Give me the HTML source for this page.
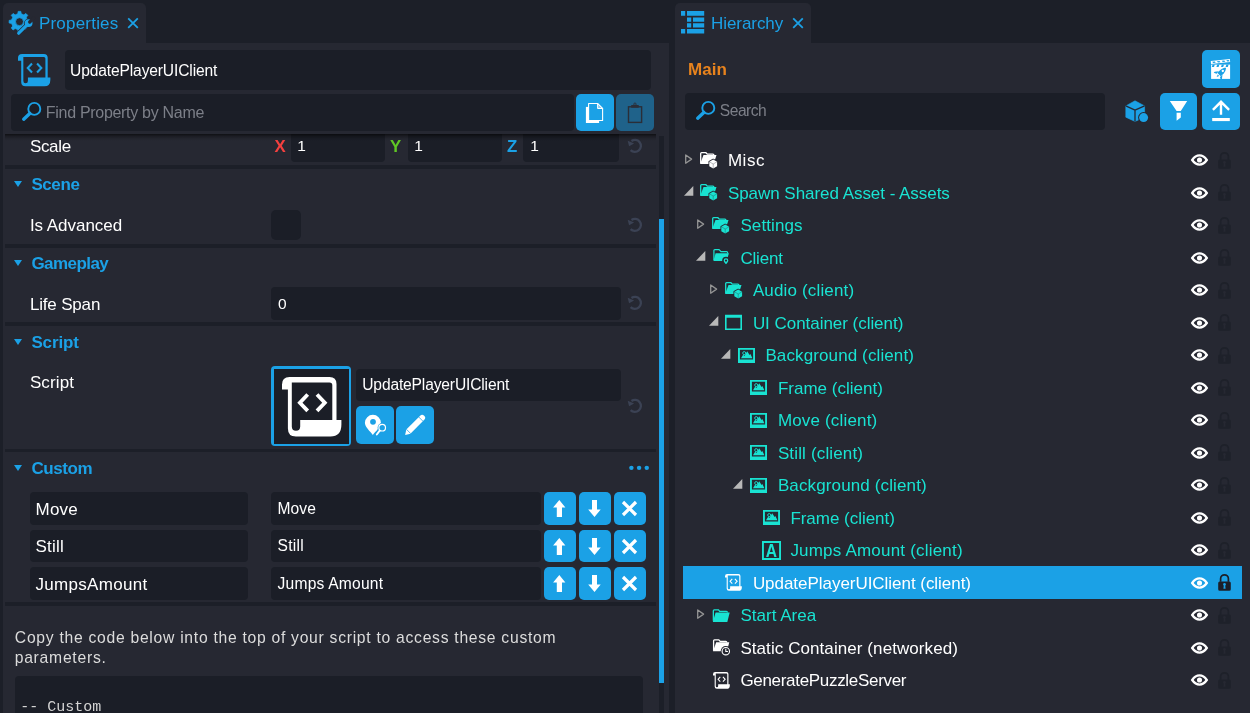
<!DOCTYPE html>
<html><head><meta charset="utf-8"><title>Editor</title>
<style>
*{box-sizing:border-box;margin:0;padding:0}
html,body{width:1250px;height:713px;overflow:hidden;background:#1c1f28;font-family:"Liberation Sans",sans-serif;color:#fff}
#root{position:relative;width:1250px;height:713px;overflow:hidden;background:#1c1f28;will-change:transform}
#root div,#root span,#root svg{position:absolute}
svg{display:block;overflow:visible}
.panel{background:#262832}
.tab{background:#262832;border-radius:5px 5px 0 0}
.t{white-space:nowrap;line-height:20px;color:#fff}
.inp{background:#1b1e27;border-radius:4px}
.b{font-weight:bold}
.sep{background:#1c1f28}
.btn{background:#1ba1e6;border-radius:5px}
</style></head><body>
<div id="root">
<div class="tab" style="left:3px;top:3px;width:143px;height:41px;"></div>
<div class="panel" style="left:3px;top:43px;width:666.2px;height:670px;"></div>
<svg style="left:9px;top:11px;" width="24" height="24" viewBox="0 0 24 24" fill="#1ba1e6" stroke="none" color="#1ba1e6"><clipPath id="gcl"><circle cx="10.5" cy="10.7" r="10.2"/></clipPath><path fill-rule="evenodd" stroke="currentColor" stroke-width="0.8" stroke-linejoin="round" d="M8.80,2.78 L9.20,0.38 L11.80,0.38 L12.20,2.78 L14.89,3.90 L16.87,2.48 L18.72,4.33 L17.30,6.31 L18.42,9.00 L20.82,9.40 L20.82,12.00 L18.42,12.40 L17.30,15.09 L18.72,17.07 L16.87,18.92 L14.89,17.50 L12.20,18.62 L11.80,21.02 L9.20,21.02 L8.80,18.62 L6.11,17.50 L4.13,18.92 L2.28,17.07 L3.70,15.09 L2.58,12.40 L0.18,12.00 L0.18,9.40 L2.58,9.00 L3.70,6.31 L2.28,4.33 L4.13,2.48 L6.11,3.90Z M14.5,10.7 A4,4 0 1 0 6.5,10.7 A4,4 0 1 0 14.5,10.7Z"/><path d="M15.3,21.4 L21,15.8" stroke="#262832" stroke-width="2.4" fill="none"/><g stroke="#262832" stroke-width="1.3" clip-path="url(#gcl)"><path d="M9.7,22.2 L18.6,13.4" stroke-width="4.5" stroke-linecap="round" fill="none"/><circle cx="19.6" cy="12.1" r="3.9" fill="#262832"/></g><path d="M9.7,22.2 L18.6,13.4" stroke="currentColor" stroke-width="3.2" stroke-linecap="round" fill="none"/><circle cx="19.6" cy="12.1" r="3.9"/><path d="M20.7,11.0 L24.6,7.1" stroke="#262832" stroke-width="3.3" stroke-linecap="round" fill="none"/></svg>
<span class="t" style="left:38.98px;top:14px;font-size:17px;letter-spacing:0.202px;color:#1ba1e6;">Properties</span>
<svg style="left:126.5px;top:16.5px;" width="12" height="12" viewBox="0 0 12 12" fill="#1ba1e6" stroke="none" color="#1ba1e6"><path d="M1.2 1.3 L10.8 10.9 M10.8 1.3 L1.2 10.9" stroke="currentColor" stroke-width="1.8" fill="none"/></svg>
<span class="t" style="left:29.88px;top:137px;font-size:17px;letter-spacing:-0.326px;">Scale</span>
<span class="t" style="left:274.38px;top:137px;font-size:16.8px;font-weight:bold;color:#f4403f;">X</span>
<div class="inp" style="left:291px;top:127px;width:94px;height:35px;"></div>
<span class="t" style="left:297.37px;top:136px;font-size:15.5px;">1</span>
<span class="t" style="left:390.08px;top:137px;font-size:16.8px;font-weight:bold;color:#60c725;">Y</span>
<div class="inp" style="left:408px;top:127px;width:94px;height:35px;"></div>
<span class="t" style="left:414.37px;top:136px;font-size:15.5px;">1</span>
<span class="t" style="left:507.08px;top:137px;font-size:16.8px;font-weight:bold;color:#1ba1e6;">Z</span>
<div class="inp" style="left:523.2px;top:127px;width:95.8px;height:35px;"></div>
<span class="t" style="left:530.37px;top:136px;font-size:15.5px;">1</span>
<svg style="left:628px;top:140px;" width="15" height="15" viewBox="0 0 15 15" fill="#3b4254" stroke="none" color="#3b4254"><path d="M3.46,1 A6,6 0 1 1 2.6,10.1" fill="none" stroke="currentColor" stroke-width="2.3"/><path d="M-0.3,0.8 L6.1,3.4 L1.1,6.2 Z"/></svg>
<div class="sep" style="left:5px;top:165px;width:651px;height:4px;"></div>
<div style="left:14.2px;top:180.9px;width:0;height:0;border-left:4.8px solid transparent;border-right:4.8px solid transparent;border-top:6.2px solid #1ba1e6"></div>
<span class="t" style="left:31.38px;top:175px;font-size:17px;font-weight:bold;letter-spacing:-0.399px;color:#1ba1e6;">Scene</span>
<span class="t" style="left:29.88px;top:216px;font-size:17px;letter-spacing:-0.030px;">Is Advanced</span>
<div class="inp" style="left:271px;top:210px;width:30px;height:30px;border-radius:5px"></div>
<svg style="left:628px;top:219px;" width="15" height="15" viewBox="0 0 15 15" fill="#3b4254" stroke="none" color="#3b4254"><path d="M3.46,1 A6,6 0 1 1 2.6,10.1" fill="none" stroke="currentColor" stroke-width="2.3"/><path d="M-0.3,0.8 L6.1,3.4 L1.1,6.2 Z"/></svg>
<div class="sep" style="left:5px;top:244px;width:651px;height:3.5px;"></div>
<div style="left:14.2px;top:259.9px;width:0;height:0;border-left:4.8px solid transparent;border-right:4.8px solid transparent;border-top:6.2px solid #1ba1e6"></div>
<span class="t" style="left:31.38px;top:254px;font-size:17px;font-weight:bold;letter-spacing:-0.546px;color:#1ba1e6;">Gameplay</span>
<span class="t" style="left:29.98px;top:295px;font-size:17px;letter-spacing:-0.183px;">Life Span</span>
<div class="inp" style="left:271px;top:287px;width:350px;height:33px;"></div>
<span class="t" style="left:278.07px;top:294px;font-size:15.5px;">0</span>
<svg style="left:628px;top:297px;" width="15" height="15" viewBox="0 0 15 15" fill="#3b4254" stroke="none" color="#3b4254"><path d="M3.46,1 A6,6 0 1 1 2.6,10.1" fill="none" stroke="currentColor" stroke-width="2.3"/><path d="M-0.3,0.8 L6.1,3.4 L1.1,6.2 Z"/></svg>
<div class="sep" style="left:5px;top:322px;width:651px;height:4px;"></div>
<div style="left:14.2px;top:338.9px;width:0;height:0;border-left:4.8px solid transparent;border-right:4.8px solid transparent;border-top:6.2px solid #1ba1e6"></div>
<span class="t" style="left:31.38px;top:333px;font-size:17px;font-weight:bold;letter-spacing:-0.131px;color:#1ba1e6;">Script</span>
<span class="t" style="left:29.88px;top:373px;font-size:17px;letter-spacing:0.139px;">Script</span>
<div class="" style="left:270.8px;top:365.8px;width:80.4px;height:80.2px;background:#1ba1e6;border-radius:4px"></div>
<div class="" style="left:274.1px;top:369.1px;width:74.6px;height:74.7px;background:#1b1e27"></div>
<svg style="left:281.6px;top:376.7px;" width="60" height="60" viewBox="0 0 60 60" fill="#fff" stroke="none" color="#fff"><path fill-rule="evenodd" d="M5.9,12.4 H0 V7.5 Q0,0 7.5,0 H47.5 Q54.5,0 54.5,7 V43.1 H59.4 V47.4 Q59.4,59.4 48.4,59.4 H13.9 Q5.9,59.4 5.9,51.4 Z M9.8,5.5 H47.5 Q50.3,5.5 50.3,8.3 V43.1 H18.2 V49.6 Q18.2,53.8 14,53.8 Q9.8,53.8 9.8,49.6 Z"/><path d="M25.7,17.5 L17.9,25.7 L25.7,33.9 M35,17.5 L42.8,25.7 L35,33.9" fill="none" stroke="currentColor" stroke-width="3.8"/></svg>
<div class="inp" style="left:356px;top:369px;width:265px;height:32px;"></div>
<span class="t" style="left:362.26px;top:375px;font-size:15.6px;letter-spacing:-0.153px;">UpdatePlayerUIClient</span>
<div class="btn" style="left:356px;top:406px;width:38px;height:38px;"></div>
<svg style="left:356px;top:406px;" width="38" height="38" viewBox="0 0 38 38" fill="#fff" stroke="none" color="#fff"><path fill-rule="evenodd" d="M16.9,8.8 A8,8 0 0 1 24.9,16.8 C24.9,21 19.5,25.5 16.85,28.9 C14.2,25.5 8.9,21 8.9,16.8 A8,8 0 0 1 16.9,8.8 Z M19.9,15.8 A2.9,2.9 0 1 0 14.1,15.8 A2.9,2.9 0 1 0 19.9,15.8Z"/><path d="M23.8,24.3 L20.7,28.6" stroke="#1ba1e6" stroke-width="3.4" stroke-linecap="round" fill="none"/><circle cx="26.2" cy="21.7" r="4.6" fill="#1ba1e6"/><path d="M23.9,24.4 L20.8,28.5" stroke="currentColor" stroke-width="1.9" stroke-linecap="round" fill="none"/><circle cx="26.2" cy="21.7" r="3.3" fill="#1ba1e6" stroke="currentColor" stroke-width="1.2"/></svg>
<div class="btn" style="left:396px;top:406px;width:38px;height:38px;"></div>
<svg style="left:396px;top:406px;" width="38" height="38" viewBox="0 0 38 38" fill="#fff" stroke="none" color="#fff"><g transform="translate(9.1,28.9) rotate(-45)"><path d="M0,0 L4.6,-2.9 H24.2 Q27,-2.9 27,0 Q27,2.9 24.2,2.9 H4.6 Z"/><path d="M4.9,-3.2 V3.2 M22.3,-3.2 V3.2" stroke="#1ba1e6" stroke-width="0.7" fill="none"/></g></svg>
<svg style="left:628px;top:400px;" width="15" height="15" viewBox="0 0 15 15" fill="#3b4254" stroke="none" color="#3b4254"><path d="M3.46,1 A6,6 0 1 1 2.6,10.1" fill="none" stroke="currentColor" stroke-width="2.3"/><path d="M-0.3,0.8 L6.1,3.4 L1.1,6.2 Z"/></svg>
<div class="sep" style="left:5px;top:449px;width:651px;height:3px;"></div>
<div style="left:14.2px;top:464.9px;width:0;height:0;border-left:4.8px solid transparent;border-right:4.8px solid transparent;border-top:6.2px solid #1ba1e6"></div>
<span class="t" style="left:31.38px;top:459px;font-size:17px;font-weight:bold;letter-spacing:-0.397px;color:#1ba1e6;">Custom</span>
<svg style="left:629px;top:464.6px;" width="20.2" height="5.7" viewBox="0 0 21 5" fill="#1ba1e6" stroke="none" color="#1ba1e6"><circle cx="2.5" cy="2.5" r="2.3"/><circle cx="10.5" cy="2.5" r="2.3"/><circle cx="18.5" cy="2.5" r="2.3"/></svg>
<div class="inp" style="left:30px;top:492px;width:218px;height:33px;"></div>
<span class="t" style="left:35.58px;top:500px;font-size:17px;letter-spacing:0.205px;">Move</span>
<div class="inp" style="left:271px;top:492px;width:270px;height:33px;"></div>
<span class="t" style="left:277.56px;top:499px;font-size:15.6px;letter-spacing:0.065px;">Move</span>
<div class="btn" style="left:544px;top:492px;width:32.2px;height:33px;border-radius:5px"></div>
<svg style="left:544px;top:492.0px;" width="32" height="33" viewBox="0 0 32 33" fill="#fff" stroke="none" color="#fff"><path d="M15.3,8 L21.4,15.5 H18 V25 H12.8 V15.5 H9.1 Z"/></svg>
<div class="btn" style="left:579px;top:492px;width:32.2px;height:33px;border-radius:5px"></div>
<svg style="left:579px;top:492.0px;" width="32" height="33" viewBox="0 0 32 33" fill="#fff" stroke="none" color="#fff"><path d="M15.5,25 L21.7,17.5 H18 V8 H13 V17.5 H9.2 Z"/></svg>
<div class="btn" style="left:614px;top:492px;width:32.2px;height:33px;border-radius:5px"></div>
<svg style="left:614px;top:492.0px;" width="32" height="33" viewBox="0 0 32 33" fill="#fff" stroke="none" color="#fff"><path d="M9,10 L22,23 M22,10 L9,23" stroke="currentColor" stroke-width="3.2" fill="none"/></svg>
<div class="inp" style="left:30px;top:530px;width:218px;height:32px;"></div>
<span class="t" style="left:35.58px;top:537px;font-size:17px;letter-spacing:0.199px;">Still</span>
<div class="inp" style="left:271px;top:530px;width:270px;height:32px;"></div>
<span class="t" style="left:277.56px;top:536px;font-size:15.6px;letter-spacing:0.272px;">Still</span>
<div class="btn" style="left:544px;top:530px;width:32.2px;height:32px;border-radius:5px"></div>
<svg style="left:544px;top:529.5px;" width="32" height="33" viewBox="0 0 32 33" fill="#fff" stroke="none" color="#fff"><path d="M15.3,8 L21.4,15.5 H18 V25 H12.8 V15.5 H9.1 Z"/></svg>
<div class="btn" style="left:579px;top:530px;width:32.2px;height:32px;border-radius:5px"></div>
<svg style="left:579px;top:529.5px;" width="32" height="33" viewBox="0 0 32 33" fill="#fff" stroke="none" color="#fff"><path d="M15.5,25 L21.7,17.5 H18 V8 H13 V17.5 H9.2 Z"/></svg>
<div class="btn" style="left:614px;top:530px;width:32.2px;height:32px;border-radius:5px"></div>
<svg style="left:614px;top:529.5px;" width="32" height="33" viewBox="0 0 32 33" fill="#fff" stroke="none" color="#fff"><path d="M9,10 L22,23 M22,10 L9,23" stroke="currentColor" stroke-width="3.2" fill="none"/></svg>
<div class="inp" style="left:30px;top:567px;width:218px;height:33px;"></div>
<span class="t" style="left:35.58px;top:575px;font-size:17px;letter-spacing:0.293px;">JumpsAmount</span>
<div class="inp" style="left:271px;top:567px;width:270px;height:33px;"></div>
<span class="t" style="left:277.56px;top:574px;font-size:15.6px;letter-spacing:0.212px;">Jumps Amount</span>
<div class="btn" style="left:544px;top:567px;width:32.2px;height:33px;border-radius:5px"></div>
<svg style="left:544px;top:567.0px;" width="32" height="33" viewBox="0 0 32 33" fill="#fff" stroke="none" color="#fff"><path d="M15.3,8 L21.4,15.5 H18 V25 H12.8 V15.5 H9.1 Z"/></svg>
<div class="btn" style="left:579px;top:567px;width:32.2px;height:33px;border-radius:5px"></div>
<svg style="left:579px;top:567.0px;" width="32" height="33" viewBox="0 0 32 33" fill="#fff" stroke="none" color="#fff"><path d="M15.5,25 L21.7,17.5 H18 V8 H13 V17.5 H9.2 Z"/></svg>
<div class="btn" style="left:614px;top:567px;width:32.2px;height:33px;border-radius:5px"></div>
<svg style="left:614px;top:567.0px;" width="32" height="33" viewBox="0 0 32 33" fill="#fff" stroke="none" color="#fff"><path d="M9,10 L22,23 M22,10 L9,23" stroke="currentColor" stroke-width="3.2" fill="none"/></svg>
<div class="sep" style="left:5px;top:602px;width:651px;height:4px;"></div>
<span class="t" style="left:14.86px;top:628px;font-size:15.7px;letter-spacing:0.721px;color:#dcdcdc;">Copy the code below into the top of your script to access these custom</span>
<span class="t" style="left:14.66px;top:648px;font-size:15.7px;letter-spacing:0.754px;color:#dcdcdc;">parameters.</span>
<div class="inp" style="left:15px;top:676px;width:628px;height:50px;"></div>
<span class="t" style="left:20.30px;top:698px;font-size:15px;font-family:'Liberation Mono',monospace;color:#d4d4d4;">-- Custom</span>
<div class="panel" style="left:5px;top:43px;width:651px;height:91.2px;"></div>
<div class="" style="left:5px;top:134.2px;width:651px;height:6.5px;background:linear-gradient(to bottom,rgba(0,0,0,.6),rgba(0,0,0,.28) 35%,rgba(0,0,0,.08) 70%,rgba(0,0,0,0))"></div>
<svg style="left:17.8px;top:53.8px;" width="32.7" height="32.7" viewBox="0 0 60 60" fill="#1ba1e6" stroke="none" color="#1ba1e6"><path fill-rule="evenodd" d="M5.9,12.4 H0 V7.5 Q0,0 7.5,0 H47.5 Q54.5,0 54.5,7 V43.1 H59.4 V47.4 Q59.4,59.4 48.4,59.4 H13.9 Q5.9,59.4 5.9,51.4 Z M9.8,5.5 H47.5 Q50.3,5.5 50.3,8.3 V43.1 H18.2 V49.6 Q18.2,53.8 14,53.8 Q9.8,53.8 9.8,49.6 Z"/><path d="M25.7,17.5 L17.9,25.7 L25.7,33.9 M35,17.5 L42.8,25.7 L35,33.9" fill="none" stroke="currentColor" stroke-width="3.8"/></svg>
<div class="inp" style="left:65px;top:50px;width:586px;height:40px;"></div>
<span class="t" style="left:70.06px;top:61px;font-size:15.6px;letter-spacing:-0.138px;">UpdatePlayerUIClient</span>
<div class="inp" style="left:11px;top:94px;width:562.5px;height:37px;"></div>
<svg style="left:21px;top:101px;" width="22" height="22" viewBox="0 0 22 22" fill="#1ba1e6" stroke="none" color="#1ba1e6"><circle cx="13.3" cy="7.9" r="6" fill="none" stroke="currentColor" stroke-width="1.9"/><path d="M8.8,12.4 L2.7,18.2" stroke="currentColor" stroke-width="3.4" stroke-linecap="round"/></svg>
<span class="t" style="left:45.84px;top:103px;font-size:16px;letter-spacing:-0.301px;color:#7c7f88;">Find Property by Name</span>
<div class="btn" style="left:576px;top:94px;width:38px;height:37px;"></div>
<svg style="left:576px;top:94px;" width="38" height="38" viewBox="0 0 38 38" fill="#fff" stroke="none" color="#fff"><path d="M9.9,12.9 H23.1 V29 H9.9 Z"/><path d="M12.6,9.5 H21.6 L26.6,14.5 V26.5 H12.6 Z" fill="#1ba1e6" stroke="currentColor" stroke-width="1.1" stroke-linejoin="round"/><path d="M21.6,9.5 V14.5 H26.6 Z" fill="#8fd0f2" stroke="currentColor" stroke-width="1" stroke-linejoin="round"/></svg>
<div class="btn" style="left:616px;top:94px;width:38px;height:37px;background:#1f628a"></div>
<svg style="left:616px;top:94px;" width="38" height="38" viewBox="0 0 38 38" fill="#2b2e38" stroke="none" color="#2b2e38"><rect x="12.5" y="12.8" width="13.1" height="15.6" fill="none" stroke="currentColor" stroke-width="1.4"/><rect x="15" y="11" width="7.9" height="2.7" rx="0.8"/><circle cx="18.95" cy="10.2" r="1.2" fill="none" stroke="currentColor" stroke-width="0.9"/></svg>
<div class="" style="left:659.1px;top:136px;width:5px;height:577px;background:#1c1f28"></div>
<div class="" style="left:659.1px;top:218.8px;width:5px;height:464.2px;background:#1ba1e6"></div>
<div class="tab" style="left:674.9px;top:3px;width:136.2px;height:41px;"></div>
<div class="panel" style="left:674.9px;top:43px;width:575.1px;height:670px;"></div>
<svg style="left:681px;top:11px;" width="24" height="24" viewBox="0 0 24 24" fill="#1ba1e6" stroke="none" color="#1ba1e6"><path d="M0,0h4.2v4.8h-4.2z M6,0h17.2v4.8h-17.2z M6,6.5h4.2v4.2h-4.2z M12,6.5h11.2v4.2h-11.2z M6,12.3h4.2v4.2h-4.2z M12,12.3h11.2v4.2h-11.2z M0,18h4.2v4.5h-4.2z M6,18h17.2v4.5h-17.2z"/></svg>
<span class="t" style="left:710.98px;top:14px;font-size:17px;letter-spacing:-0.061px;color:#1ba1e6;">Hierarchy</span>
<svg style="left:791.5px;top:16.5px;" width="12" height="12" viewBox="0 0 12 12" fill="#1ba1e6" stroke="none" color="#1ba1e6"><path d="M1.2 1.3 L10.8 10.9 M10.8 1.3 L1.2 10.9" stroke="currentColor" stroke-width="1.8" fill="none"/></svg>
<span class="t" style="left:688.08px;top:60px;font-size:17px;font-weight:bold;letter-spacing:-0.009px;color:#e8831d;">Main</span>
<div class="inp" style="left:685px;top:93px;width:420px;height:37px;"></div>
<svg style="left:694.9px;top:99.7px;" width="22" height="22" viewBox="0 0 22 22" fill="#1ba1e6" stroke="none" color="#1ba1e6"><circle cx="13.3" cy="7.9" r="6" fill="none" stroke="currentColor" stroke-width="1.9"/><path d="M8.8,12.4 L2.7,18.2" stroke="currentColor" stroke-width="3.4" stroke-linecap="round"/></svg>
<span class="t" style="left:719.86px;top:101px;font-size:15.6px;letter-spacing:-0.504px;color:#7c7f88;">Search</span>
<div class="btn" style="left:1202px;top:50px;width:38px;height:38px;"></div>
<svg style="left:1202px;top:50px;" width="38" height="38" viewBox="0 0 38 38" fill="#fff" stroke="none" color="#fff"><rect x="9.1" y="14.6" width="19" height="14.3"/><path d="M10.6,14.6 h2.2 l-0.8,2.3 h-2.2z M15.2,14.6 h2.2 l-0.8,2.3 h-2.2z M19.8,14.6 h2.2 l-0.8,2.3 h-2.2z M24.4,14.6 h2.2 l-0.8,2.3 h-2.2z" fill="#1ba1e6"/><g transform="rotate(-6 9.1 14.2)"><rect x="9.1" y="10.9" width="19.2" height="3"/><path d="M10.4,11.8 h2.6 l0.9,1.5 h-2.6z M15.2,11.8 h2.6 l0.9,1.5 h-2.6z M20,11.8 h2.6 l0.9,1.5 h-2.6z M24.6,11.8 h2.4 l0.9,1.5 h-2.4z" fill="#1ba1e6"/></g><g transform="translate(19.3,22.4) rotate(45) scale(1.18)" fill="#1ba1e6"><path d="M0,-5.6 C2.2,-3.6 2.4,0 1.9,2.6 H-1.9 C-2.4,0 -2.2,-3.6 0,-5.6Z"/><path d="M-2.2,0.8 L-4.3,3.6 V4.8 L-2,3.6Z M2.2,0.8 L4.3,3.6 V4.8 L2,3.6Z M-0.8,3.4 H0.8 L0,5.6Z"/><circle cx="0" cy="-1.8" r="1" fill="#fff"/></g></svg>
<svg style="left:1120px;top:100px;" width="30" height="30" viewBox="0 0 30 30" fill="#1ba1e6" stroke="none" color="#1ba1e6"><path d="M15,0.8 L24.6,5.9 L24.6,17.2 L15,21.4 L5.8,17.2 L5.8,5.9Z" stroke-linejoin="round" stroke="currentColor" stroke-width="0.6"/><path d="M15,10.2 L24.6,5.9 M15,10.2 L5.8,5.9 M15,10.2 V21.4" stroke="#262832" stroke-width="1.3" fill="none"/><circle cx="23.6" cy="17.6" r="5.5" fill="#262832"/><circle cx="23.6" cy="17.6" r="4.5"/></svg>
<div class="btn" style="left:1159.8px;top:93px;width:37.3px;height:37px;"></div>
<svg style="left:1160px;top:93px;" width="38" height="38" viewBox="0 0 38 38" fill="#fff" stroke="none" color="#fff"><path d="M9.8,8 H27.2 L20.8,18.1 H16.6 Z M16.6,19.8 H20.8 V24.5 L16.6,27.7 Z"/></svg>
<div class="btn" style="left:1202px;top:93px;width:38px;height:37px;"></div>
<svg style="left:1202px;top:93px;" width="38" height="38" viewBox="0 0 38 38" fill="#fff" stroke="none" color="#fff"><path d="M19,9.6 V21.8 M10.9,16.9 L19,8.8 L27.1,16.9" fill="none" stroke="currentColor" stroke-width="2.4"/><rect x="10.2" y="25" width="17.6" height="3.1"/></svg>
<svg style="left:685.0px;top:154.0px;" width="8" height="11" viewBox="0 0 8 11" fill="#949494" stroke="none" color="#949494"><path d="M0.7,1 L6.6,5.1 L0.7,9.2 Z" fill="none" stroke="currentColor" stroke-width="1.3" stroke-linejoin="round"/></svg>
<svg style="left:699.8px;top:151.8px;" width="19" height="19" viewBox="0 0 19 19" fill="#fff" stroke="none" color="#fff"><path d="M0.7,11.5 V1.6 Q0.7,0.7 1.6,0.7 H5.9 L7.3,2.2 H12.9 Q13.9,2.2 13.9,3.2" fill="none" stroke="currentColor" stroke-width="1.3"/><path d="M3.5,3.1 H16.5 L13.6,12 H0.1 Z"/><path d="M13.20,7.50 L17.10,9.75 L17.10,14.25 L13.20,16.50 L9.30,14.25 L9.30,9.75Z" stroke="#262832" stroke-width="1.7" stroke-linejoin="round" paint-order="stroke"/><path d="M13.2,12.0 L17.10,9.75 M13.2,12.0 L9.30,9.75 M13.2,12.0 V16.50" stroke="#262832" stroke-opacity="0.4" stroke-width="0.8" fill="none"/></svg>
<span class="t" style="left:727.88px;top:151px;font-size:17px;letter-spacing:0.537px;">Misc</span>
<svg style="left:1191px;top:154.0px;" width="17" height="12" viewBox="0 0 17 12" fill="#fff" stroke="none" color="#fff"><path d="M1.2,6 Q4.3,1.45 8.5,1.45 Q12.7,1.45 15.8,6 Q12.7,10.55 8.5,10.55 Q4.3,10.55 1.2,6 Z" fill="none" stroke="currentColor" stroke-width="2.3" stroke-linejoin="miter"/><circle cx="8.5" cy="6" r="2.55"/></svg>
<svg style="left:1218px;top:151.5px;" width="13" height="17" viewBox="0 0 13 17" fill="#1e212a" stroke="none" color="#1e212a"><path fill-rule="evenodd" d="M1.7,7.4 H11.3 Q12.8,7.4 12.8,8.9 V15.3 Q12.8,16.8 11.3,16.8 H1.7 Q0.2,16.8 0.2,15.3 V8.9 Q0.2,7.4 1.7,7.4 Z M6.5,9 A1.4,1.4 0 0 0 5.75,11.6 L5.4,14.8 H7.6 L7.25,11.6 A1.4,1.4 0 0 0 6.5,9 Z"/><path d="M2.6,7.8 V4.7 A3.9,3.9 0 0 1 10.4,4.7 V7.8" fill="none" stroke="currentColor" stroke-width="1.7"/></svg>
<svg style="left:684.0px;top:186.0px;" width="10" height="10" viewBox="0 0 10 10" fill="#b8b8b8" stroke="none" color="#b8b8b8"><path d="M9.3,0 V9.7 H0 Z"/></svg>
<svg style="left:699.8px;top:184.3px;" width="19" height="19" viewBox="0 0 19 19" fill="#19e3d2" stroke="none" color="#19e3d2"><path d="M0.7,11.5 V1.6 Q0.7,0.7 1.6,0.7 H5.9 L7.3,2.2 H12.9 Q13.9,2.2 13.9,3.2" fill="none" stroke="currentColor" stroke-width="1.3"/><path d="M3.5,3.1 H16.5 L13.6,12 H0.1 Z"/><path d="M13.20,7.50 L17.10,9.75 L17.10,14.25 L13.20,16.50 L9.30,14.25 L9.30,9.75Z" stroke="#262832" stroke-width="1.7" stroke-linejoin="round" paint-order="stroke"/><path d="M13.2,12.0 L17.10,9.75 M13.2,12.0 L9.30,9.75 M13.2,12.0 V16.50" stroke="#262832" stroke-opacity="0.4" stroke-width="0.8" fill="none"/></svg>
<span class="t" style="left:727.88px;top:184px;font-size:17px;letter-spacing:-0.041px;color:#19e3d2;">Spawn Shared Asset - Assets</span>
<svg style="left:1191px;top:186.5px;" width="17" height="12" viewBox="0 0 17 12" fill="#fff" stroke="none" color="#fff"><path d="M1.2,6 Q4.3,1.45 8.5,1.45 Q12.7,1.45 15.8,6 Q12.7,10.55 8.5,10.55 Q4.3,10.55 1.2,6 Z" fill="none" stroke="currentColor" stroke-width="2.3" stroke-linejoin="miter"/><circle cx="8.5" cy="6" r="2.55"/></svg>
<svg style="left:1218px;top:184.0px;" width="13" height="17" viewBox="0 0 13 17" fill="#1e212a" stroke="none" color="#1e212a"><path fill-rule="evenodd" d="M1.7,7.4 H11.3 Q12.8,7.4 12.8,8.9 V15.3 Q12.8,16.8 11.3,16.8 H1.7 Q0.2,16.8 0.2,15.3 V8.9 Q0.2,7.4 1.7,7.4 Z M6.5,9 A1.4,1.4 0 0 0 5.75,11.6 L5.4,14.8 H7.6 L7.25,11.6 A1.4,1.4 0 0 0 6.5,9 Z"/><path d="M2.6,7.8 V4.7 A3.9,3.9 0 0 1 10.4,4.7 V7.8" fill="none" stroke="currentColor" stroke-width="1.7"/></svg>
<svg style="left:697.25px;top:219.0px;" width="8" height="11" viewBox="0 0 8 11" fill="#949494" stroke="none" color="#949494"><path d="M0.7,1 L6.6,5.1 L0.7,9.2 Z" fill="none" stroke="currentColor" stroke-width="1.3" stroke-linejoin="round"/></svg>
<svg style="left:712.4px;top:216.8px;" width="19" height="19" viewBox="0 0 19 19" fill="#19e3d2" stroke="none" color="#19e3d2"><path d="M0.7,11.5 V1.6 Q0.7,0.7 1.6,0.7 H5.9 L7.3,2.2 H12.9 Q13.9,2.2 13.9,3.2" fill="none" stroke="currentColor" stroke-width="1.3"/><path d="M3.5,3.1 H16.5 L13.6,12 H0.1 Z"/><path d="M13.20,7.50 L17.10,9.75 L17.10,14.25 L13.20,16.50 L9.30,14.25 L9.30,9.75Z" stroke="#262832" stroke-width="1.7" stroke-linejoin="round" paint-order="stroke"/><path d="M13.2,12.0 L17.10,9.75 M13.2,12.0 L9.30,9.75 M13.2,12.0 V16.50" stroke="#262832" stroke-opacity="0.4" stroke-width="0.8" fill="none"/></svg>
<span class="t" style="left:740.38px;top:216px;font-size:17px;letter-spacing:0.108px;color:#19e3d2;">Settings</span>
<svg style="left:1191px;top:219.0px;" width="17" height="12" viewBox="0 0 17 12" fill="#fff" stroke="none" color="#fff"><path d="M1.2,6 Q4.3,1.45 8.5,1.45 Q12.7,1.45 15.8,6 Q12.7,10.55 8.5,10.55 Q4.3,10.55 1.2,6 Z" fill="none" stroke="currentColor" stroke-width="2.3" stroke-linejoin="miter"/><circle cx="8.5" cy="6" r="2.55"/></svg>
<svg style="left:1218px;top:216.5px;" width="13" height="17" viewBox="0 0 13 17" fill="#1e212a" stroke="none" color="#1e212a"><path fill-rule="evenodd" d="M1.7,7.4 H11.3 Q12.8,7.4 12.8,8.9 V15.3 Q12.8,16.8 11.3,16.8 H1.7 Q0.2,16.8 0.2,15.3 V8.9 Q0.2,7.4 1.7,7.4 Z M6.5,9 A1.4,1.4 0 0 0 5.75,11.6 L5.4,14.8 H7.6 L7.25,11.6 A1.4,1.4 0 0 0 6.5,9 Z"/><path d="M2.6,7.8 V4.7 A3.9,3.9 0 0 1 10.4,4.7 V7.8" fill="none" stroke="currentColor" stroke-width="1.7"/></svg>
<svg style="left:696.25px;top:251.0px;" width="10" height="10" viewBox="0 0 10 10" fill="#b8b8b8" stroke="none" color="#b8b8b8"><path d="M9.3,0 V9.7 H0 Z"/></svg>
<svg style="left:712.4px;top:249.3px;" width="19" height="19" viewBox="0 0 19 19" fill="#19e3d2" stroke="none" color="#19e3d2"><path d="M1.9,11 V1.6 Q1.9,0.6 2.9,0.6 H7 L9,2.6 H14.6 Q15.6,2.6 15.6,3.6 V4.6" fill="none" stroke="currentColor" stroke-width="1.2"/><path d="M3.6,4.3 H16.9 L14.6,11.9 H1.4 Z"/><path d="M14,8.6 A3.1,3.1 0 0 1 17.1,11.7 C17.1,13.6 15.2,15 14,16.6 C12.8,15 10.9,13.6 10.9,11.7 A3.1,3.1 0 0 1 14,8.6Z" stroke="#262832" stroke-width="1.5"/><circle cx="14" cy="11.6" r="1.1" fill="#262832"/></svg>
<span class="t" style="left:740.38px;top:249px;font-size:17px;letter-spacing:-0.178px;color:#19e3d2;">Client</span>
<svg style="left:1191px;top:251.5px;" width="17" height="12" viewBox="0 0 17 12" fill="#fff" stroke="none" color="#fff"><path d="M1.2,6 Q4.3,1.45 8.5,1.45 Q12.7,1.45 15.8,6 Q12.7,10.55 8.5,10.55 Q4.3,10.55 1.2,6 Z" fill="none" stroke="currentColor" stroke-width="2.3" stroke-linejoin="miter"/><circle cx="8.5" cy="6" r="2.55"/></svg>
<svg style="left:1218px;top:249.0px;" width="13" height="17" viewBox="0 0 13 17" fill="#1e212a" stroke="none" color="#1e212a"><path fill-rule="evenodd" d="M1.7,7.4 H11.3 Q12.8,7.4 12.8,8.9 V15.3 Q12.8,16.8 11.3,16.8 H1.7 Q0.2,16.8 0.2,15.3 V8.9 Q0.2,7.4 1.7,7.4 Z M6.5,9 A1.4,1.4 0 0 0 5.75,11.6 L5.4,14.8 H7.6 L7.25,11.6 A1.4,1.4 0 0 0 6.5,9 Z"/><path d="M2.6,7.8 V4.7 A3.9,3.9 0 0 1 10.4,4.7 V7.8" fill="none" stroke="currentColor" stroke-width="1.7"/></svg>
<svg style="left:709.5px;top:284.0px;" width="8" height="11" viewBox="0 0 8 11" fill="#949494" stroke="none" color="#949494"><path d="M0.7,1 L6.6,5.1 L0.7,9.2 Z" fill="none" stroke="currentColor" stroke-width="1.3" stroke-linejoin="round"/></svg>
<svg style="left:725.0px;top:281.8px;" width="19" height="19" viewBox="0 0 19 19" fill="#19e3d2" stroke="none" color="#19e3d2"><path d="M0.7,11.5 V1.6 Q0.7,0.7 1.6,0.7 H5.9 L7.3,2.2 H12.9 Q13.9,2.2 13.9,3.2" fill="none" stroke="currentColor" stroke-width="1.3"/><path d="M3.5,3.1 H16.5 L13.6,12 H0.1 Z"/><path d="M13.20,7.50 L17.10,9.75 L17.10,14.25 L13.20,16.50 L9.30,14.25 L9.30,9.75Z" stroke="#262832" stroke-width="1.7" stroke-linejoin="round" paint-order="stroke"/><path d="M13.2,12.0 L17.10,9.75 M13.2,12.0 L9.30,9.75 M13.2,12.0 V16.50" stroke="#262832" stroke-opacity="0.4" stroke-width="0.8" fill="none"/></svg>
<span class="t" style="left:752.88px;top:281px;font-size:17px;letter-spacing:0.156px;color:#19e3d2;">Audio (client)</span>
<svg style="left:1191px;top:284.0px;" width="17" height="12" viewBox="0 0 17 12" fill="#fff" stroke="none" color="#fff"><path d="M1.2,6 Q4.3,1.45 8.5,1.45 Q12.7,1.45 15.8,6 Q12.7,10.55 8.5,10.55 Q4.3,10.55 1.2,6 Z" fill="none" stroke="currentColor" stroke-width="2.3" stroke-linejoin="miter"/><circle cx="8.5" cy="6" r="2.55"/></svg>
<svg style="left:1218px;top:281.5px;" width="13" height="17" viewBox="0 0 13 17" fill="#1e212a" stroke="none" color="#1e212a"><path fill-rule="evenodd" d="M1.7,7.4 H11.3 Q12.8,7.4 12.8,8.9 V15.3 Q12.8,16.8 11.3,16.8 H1.7 Q0.2,16.8 0.2,15.3 V8.9 Q0.2,7.4 1.7,7.4 Z M6.5,9 A1.4,1.4 0 0 0 5.75,11.6 L5.4,14.8 H7.6 L7.25,11.6 A1.4,1.4 0 0 0 6.5,9 Z"/><path d="M2.6,7.8 V4.7 A3.9,3.9 0 0 1 10.4,4.7 V7.8" fill="none" stroke="currentColor" stroke-width="1.7"/></svg>
<svg style="left:708.5px;top:316.0px;" width="10" height="10" viewBox="0 0 10 10" fill="#b8b8b8" stroke="none" color="#b8b8b8"><path d="M9.3,0 V9.7 H0 Z"/></svg>
<svg style="left:725.0px;top:314.3px;" width="19" height="19" viewBox="0 0 19 19" fill="#19e3d2" stroke="none" color="#19e3d2"><path fill-rule="evenodd" d="M0,0.7 H17 V15.9 H0 Z M1.6,3.8 V14.4 H15.4 V3.8 Z"/></svg>
<span class="t" style="left:752.88px;top:314px;font-size:17px;letter-spacing:-0.037px;color:#19e3d2;">UI Container (client)</span>
<svg style="left:1191px;top:316.5px;" width="17" height="12" viewBox="0 0 17 12" fill="#fff" stroke="none" color="#fff"><path d="M1.2,6 Q4.3,1.45 8.5,1.45 Q12.7,1.45 15.8,6 Q12.7,10.55 8.5,10.55 Q4.3,10.55 1.2,6 Z" fill="none" stroke="currentColor" stroke-width="2.3" stroke-linejoin="miter"/><circle cx="8.5" cy="6" r="2.55"/></svg>
<svg style="left:1218px;top:314.0px;" width="13" height="17" viewBox="0 0 13 17" fill="#1e212a" stroke="none" color="#1e212a"><path fill-rule="evenodd" d="M1.7,7.4 H11.3 Q12.8,7.4 12.8,8.9 V15.3 Q12.8,16.8 11.3,16.8 H1.7 Q0.2,16.8 0.2,15.3 V8.9 Q0.2,7.4 1.7,7.4 Z M6.5,9 A1.4,1.4 0 0 0 5.75,11.6 L5.4,14.8 H7.6 L7.25,11.6 A1.4,1.4 0 0 0 6.5,9 Z"/><path d="M2.6,7.8 V4.7 A3.9,3.9 0 0 1 10.4,4.7 V7.8" fill="none" stroke="currentColor" stroke-width="1.7"/></svg>
<svg style="left:720.75px;top:348.5px;" width="10" height="10" viewBox="0 0 10 10" fill="#b8b8b8" stroke="none" color="#b8b8b8"><path d="M9.3,0 V9.7 H0 Z"/></svg>
<svg style="left:737.5999999999999px;top:346.8px;" width="19" height="19" viewBox="0 0 19 19" fill="#19e3d2" stroke="none" color="#19e3d2"><g transform="translate(0,0.9)"><path fill-rule="evenodd" d="M0,0 H17 V15.1 H0 Z M1.9,1.9 V11.7 H15.1 V1.9 Z"/><path d="M3,10.3 L5.2,6.6 L6.4,8 L9.2,3.3 L11.6,7 L12.4,6.2 L14.4,10.3 Z"/><circle cx="6.2" cy="5.2" r="1.5" fill="none" stroke="currentColor" stroke-width="0.9"/></g></svg>
<span class="t" style="left:765.38px;top:346px;font-size:17px;letter-spacing:0.117px;color:#19e3d2;">Background (client)</span>
<svg style="left:1191px;top:349.0px;" width="17" height="12" viewBox="0 0 17 12" fill="#fff" stroke="none" color="#fff"><path d="M1.2,6 Q4.3,1.45 8.5,1.45 Q12.7,1.45 15.8,6 Q12.7,10.55 8.5,10.55 Q4.3,10.55 1.2,6 Z" fill="none" stroke="currentColor" stroke-width="2.3" stroke-linejoin="miter"/><circle cx="8.5" cy="6" r="2.55"/></svg>
<svg style="left:1218px;top:346.5px;" width="13" height="17" viewBox="0 0 13 17" fill="#1e212a" stroke="none" color="#1e212a"><path fill-rule="evenodd" d="M1.7,7.4 H11.3 Q12.8,7.4 12.8,8.9 V15.3 Q12.8,16.8 11.3,16.8 H1.7 Q0.2,16.8 0.2,15.3 V8.9 Q0.2,7.4 1.7,7.4 Z M6.5,9 A1.4,1.4 0 0 0 5.75,11.6 L5.4,14.8 H7.6 L7.25,11.6 A1.4,1.4 0 0 0 6.5,9 Z"/><path d="M2.6,7.8 V4.7 A3.9,3.9 0 0 1 10.4,4.7 V7.8" fill="none" stroke="currentColor" stroke-width="1.7"/></svg>
<svg style="left:750.1999999999999px;top:379.3px;" width="19" height="19" viewBox="0 0 19 19" fill="#19e3d2" stroke="none" color="#19e3d2"><g transform="translate(0,0.9)"><path fill-rule="evenodd" d="M0,0 H17 V15.1 H0 Z M1.9,1.9 V11.7 H15.1 V1.9 Z"/><path d="M3,10.3 L5.2,6.6 L6.4,8 L9.2,3.3 L11.6,7 L12.4,6.2 L14.4,10.3 Z"/><circle cx="6.2" cy="5.2" r="1.5" fill="none" stroke="currentColor" stroke-width="0.9"/></g></svg>
<span class="t" style="left:777.88px;top:379px;font-size:17px;letter-spacing:0.010px;color:#19e3d2;">Frame (client)</span>
<svg style="left:1191px;top:381.5px;" width="17" height="12" viewBox="0 0 17 12" fill="#fff" stroke="none" color="#fff"><path d="M1.2,6 Q4.3,1.45 8.5,1.45 Q12.7,1.45 15.8,6 Q12.7,10.55 8.5,10.55 Q4.3,10.55 1.2,6 Z" fill="none" stroke="currentColor" stroke-width="2.3" stroke-linejoin="miter"/><circle cx="8.5" cy="6" r="2.55"/></svg>
<svg style="left:1218px;top:379.0px;" width="13" height="17" viewBox="0 0 13 17" fill="#1e212a" stroke="none" color="#1e212a"><path fill-rule="evenodd" d="M1.7,7.4 H11.3 Q12.8,7.4 12.8,8.9 V15.3 Q12.8,16.8 11.3,16.8 H1.7 Q0.2,16.8 0.2,15.3 V8.9 Q0.2,7.4 1.7,7.4 Z M6.5,9 A1.4,1.4 0 0 0 5.75,11.6 L5.4,14.8 H7.6 L7.25,11.6 A1.4,1.4 0 0 0 6.5,9 Z"/><path d="M2.6,7.8 V4.7 A3.9,3.9 0 0 1 10.4,4.7 V7.8" fill="none" stroke="currentColor" stroke-width="1.7"/></svg>
<svg style="left:750.1999999999999px;top:411.8px;" width="19" height="19" viewBox="0 0 19 19" fill="#19e3d2" stroke="none" color="#19e3d2"><g transform="translate(0,0.9)"><path fill-rule="evenodd" d="M0,0 H17 V15.1 H0 Z M1.9,1.9 V11.7 H15.1 V1.9 Z"/><path d="M3,10.3 L5.2,6.6 L6.4,8 L9.2,3.3 L11.6,7 L12.4,6.2 L14.4,10.3 Z"/><circle cx="6.2" cy="5.2" r="1.5" fill="none" stroke="currentColor" stroke-width="0.9"/></g></svg>
<span class="t" style="left:777.88px;top:411px;font-size:17px;letter-spacing:0.168px;color:#19e3d2;">Move (client)</span>
<svg style="left:1191px;top:414.0px;" width="17" height="12" viewBox="0 0 17 12" fill="#fff" stroke="none" color="#fff"><path d="M1.2,6 Q4.3,1.45 8.5,1.45 Q12.7,1.45 15.8,6 Q12.7,10.55 8.5,10.55 Q4.3,10.55 1.2,6 Z" fill="none" stroke="currentColor" stroke-width="2.3" stroke-linejoin="miter"/><circle cx="8.5" cy="6" r="2.55"/></svg>
<svg style="left:1218px;top:411.5px;" width="13" height="17" viewBox="0 0 13 17" fill="#1e212a" stroke="none" color="#1e212a"><path fill-rule="evenodd" d="M1.7,7.4 H11.3 Q12.8,7.4 12.8,8.9 V15.3 Q12.8,16.8 11.3,16.8 H1.7 Q0.2,16.8 0.2,15.3 V8.9 Q0.2,7.4 1.7,7.4 Z M6.5,9 A1.4,1.4 0 0 0 5.75,11.6 L5.4,14.8 H7.6 L7.25,11.6 A1.4,1.4 0 0 0 6.5,9 Z"/><path d="M2.6,7.8 V4.7 A3.9,3.9 0 0 1 10.4,4.7 V7.8" fill="none" stroke="currentColor" stroke-width="1.7"/></svg>
<svg style="left:750.1999999999999px;top:444.3px;" width="19" height="19" viewBox="0 0 19 19" fill="#19e3d2" stroke="none" color="#19e3d2"><g transform="translate(0,0.9)"><path fill-rule="evenodd" d="M0,0 H17 V15.1 H0 Z M1.9,1.9 V11.7 H15.1 V1.9 Z"/><path d="M3,10.3 L5.2,6.6 L6.4,8 L9.2,3.3 L11.6,7 L12.4,6.2 L14.4,10.3 Z"/><circle cx="6.2" cy="5.2" r="1.5" fill="none" stroke="currentColor" stroke-width="0.9"/></g></svg>
<span class="t" style="left:777.88px;top:444px;font-size:17px;letter-spacing:0.155px;color:#19e3d2;">Still (client)</span>
<svg style="left:1191px;top:446.5px;" width="17" height="12" viewBox="0 0 17 12" fill="#fff" stroke="none" color="#fff"><path d="M1.2,6 Q4.3,1.45 8.5,1.45 Q12.7,1.45 15.8,6 Q12.7,10.55 8.5,10.55 Q4.3,10.55 1.2,6 Z" fill="none" stroke="currentColor" stroke-width="2.3" stroke-linejoin="miter"/><circle cx="8.5" cy="6" r="2.55"/></svg>
<svg style="left:1218px;top:444.0px;" width="13" height="17" viewBox="0 0 13 17" fill="#1e212a" stroke="none" color="#1e212a"><path fill-rule="evenodd" d="M1.7,7.4 H11.3 Q12.8,7.4 12.8,8.9 V15.3 Q12.8,16.8 11.3,16.8 H1.7 Q0.2,16.8 0.2,15.3 V8.9 Q0.2,7.4 1.7,7.4 Z M6.5,9 A1.4,1.4 0 0 0 5.75,11.6 L5.4,14.8 H7.6 L7.25,11.6 A1.4,1.4 0 0 0 6.5,9 Z"/><path d="M2.6,7.8 V4.7 A3.9,3.9 0 0 1 10.4,4.7 V7.8" fill="none" stroke="currentColor" stroke-width="1.7"/></svg>
<svg style="left:733.0px;top:478.5px;" width="10" height="10" viewBox="0 0 10 10" fill="#b8b8b8" stroke="none" color="#b8b8b8"><path d="M9.3,0 V9.7 H0 Z"/></svg>
<svg style="left:750.1999999999999px;top:476.8px;" width="19" height="19" viewBox="0 0 19 19" fill="#19e3d2" stroke="none" color="#19e3d2"><g transform="translate(0,0.9)"><path fill-rule="evenodd" d="M0,0 H17 V15.1 H0 Z M1.9,1.9 V11.7 H15.1 V1.9 Z"/><path d="M3,10.3 L5.2,6.6 L6.4,8 L9.2,3.3 L11.6,7 L12.4,6.2 L14.4,10.3 Z"/><circle cx="6.2" cy="5.2" r="1.5" fill="none" stroke="currentColor" stroke-width="0.9"/></g></svg>
<span class="t" style="left:777.88px;top:476px;font-size:17px;letter-spacing:0.128px;color:#19e3d2;">Background (client)</span>
<svg style="left:1191px;top:479.0px;" width="17" height="12" viewBox="0 0 17 12" fill="#fff" stroke="none" color="#fff"><path d="M1.2,6 Q4.3,1.45 8.5,1.45 Q12.7,1.45 15.8,6 Q12.7,10.55 8.5,10.55 Q4.3,10.55 1.2,6 Z" fill="none" stroke="currentColor" stroke-width="2.3" stroke-linejoin="miter"/><circle cx="8.5" cy="6" r="2.55"/></svg>
<svg style="left:1218px;top:476.5px;" width="13" height="17" viewBox="0 0 13 17" fill="#1e212a" stroke="none" color="#1e212a"><path fill-rule="evenodd" d="M1.7,7.4 H11.3 Q12.8,7.4 12.8,8.9 V15.3 Q12.8,16.8 11.3,16.8 H1.7 Q0.2,16.8 0.2,15.3 V8.9 Q0.2,7.4 1.7,7.4 Z M6.5,9 A1.4,1.4 0 0 0 5.75,11.6 L5.4,14.8 H7.6 L7.25,11.6 A1.4,1.4 0 0 0 6.5,9 Z"/><path d="M2.6,7.8 V4.7 A3.9,3.9 0 0 1 10.4,4.7 V7.8" fill="none" stroke="currentColor" stroke-width="1.7"/></svg>
<svg style="left:762.8px;top:509.3px;" width="19" height="19" viewBox="0 0 19 19" fill="#19e3d2" stroke="none" color="#19e3d2"><g transform="translate(0,0.9)"><path fill-rule="evenodd" d="M0,0 H17 V15.1 H0 Z M1.9,1.9 V11.7 H15.1 V1.9 Z"/><path d="M3,10.3 L5.2,6.6 L6.4,8 L9.2,3.3 L11.6,7 L12.4,6.2 L14.4,10.3 Z"/><circle cx="6.2" cy="5.2" r="1.5" fill="none" stroke="currentColor" stroke-width="0.9"/></g></svg>
<span class="t" style="left:790.38px;top:509px;font-size:17px;letter-spacing:-0.026px;color:#19e3d2;">Frame (client)</span>
<svg style="left:1191px;top:511.5px;" width="17" height="12" viewBox="0 0 17 12" fill="#fff" stroke="none" color="#fff"><path d="M1.2,6 Q4.3,1.45 8.5,1.45 Q12.7,1.45 15.8,6 Q12.7,10.55 8.5,10.55 Q4.3,10.55 1.2,6 Z" fill="none" stroke="currentColor" stroke-width="2.3" stroke-linejoin="miter"/><circle cx="8.5" cy="6" r="2.55"/></svg>
<svg style="left:1218px;top:509.0px;" width="13" height="17" viewBox="0 0 13 17" fill="#1e212a" stroke="none" color="#1e212a"><path fill-rule="evenodd" d="M1.7,7.4 H11.3 Q12.8,7.4 12.8,8.9 V15.3 Q12.8,16.8 11.3,16.8 H1.7 Q0.2,16.8 0.2,15.3 V8.9 Q0.2,7.4 1.7,7.4 Z M6.5,9 A1.4,1.4 0 0 0 5.75,11.6 L5.4,14.8 H7.6 L7.25,11.6 A1.4,1.4 0 0 0 6.5,9 Z"/><path d="M2.6,7.8 V4.7 A3.9,3.9 0 0 1 10.4,4.7 V7.8" fill="none" stroke="currentColor" stroke-width="1.7"/></svg>
<svg style="left:762.2px;top:540.7px;" width="19" height="19" viewBox="0 0 19 19" fill="#19e3d2" stroke="none" color="#19e3d2"><path fill-rule="evenodd" d="M0,0 H19 V19 H0 Z M1.9,1.9 V17.1 H17.1 V1.9 Z"/><text x="9.5" y="16.2" text-anchor="middle" font-family="Liberation Sans,sans-serif" font-weight="bold" font-size="19" transform="translate(9.5,0) scale(0.82,1) translate(-9.5,0)">A</text></svg>
<span class="t" style="left:790.38px;top:541px;font-size:17px;letter-spacing:0.201px;color:#19e3d2;">Jumps Amount (client)</span>
<svg style="left:1191px;top:544.0px;" width="17" height="12" viewBox="0 0 17 12" fill="#fff" stroke="none" color="#fff"><path d="M1.2,6 Q4.3,1.45 8.5,1.45 Q12.7,1.45 15.8,6 Q12.7,10.55 8.5,10.55 Q4.3,10.55 1.2,6 Z" fill="none" stroke="currentColor" stroke-width="2.3" stroke-linejoin="miter"/><circle cx="8.5" cy="6" r="2.55"/></svg>
<svg style="left:1218px;top:541.5px;" width="13" height="17" viewBox="0 0 13 17" fill="#1e212a" stroke="none" color="#1e212a"><path fill-rule="evenodd" d="M1.7,7.4 H11.3 Q12.8,7.4 12.8,8.9 V15.3 Q12.8,16.8 11.3,16.8 H1.7 Q0.2,16.8 0.2,15.3 V8.9 Q0.2,7.4 1.7,7.4 Z M6.5,9 A1.4,1.4 0 0 0 5.75,11.6 L5.4,14.8 H7.6 L7.25,11.6 A1.4,1.4 0 0 0 6.5,9 Z"/><path d="M2.6,7.8 V4.7 A3.9,3.9 0 0 1 10.4,4.7 V7.8" fill="none" stroke="currentColor" stroke-width="1.7"/></svg>
<div class="" style="left:683px;top:566.3px;width:559px;height:32.4px;background:#1ba1e6"></div>
<svg style="left:725.2px;top:574.2px;" width="17" height="17" viewBox="0 0 60 60" fill="#fff" stroke="none" color="#fff"><path fill-rule="evenodd" d="M5.9,12.4 H0 V7.5 Q0,0 7.5,0 H47.5 Q54.5,0 54.5,7 V43.1 H59.4 V47.4 Q59.4,59.4 48.4,59.4 H13.9 Q5.9,59.4 5.9,51.4 Z M9.8,5.5 H47.5 Q50.3,5.5 50.3,8.3 V43.1 H18.2 V49.6 Q18.2,53.8 14,53.8 Q9.8,53.8 9.8,49.6 Z"/><path d="M25.7,17.5 L17.9,25.7 L25.7,33.9 M35,17.5 L42.8,25.7 L35,33.9" fill="none" stroke="currentColor" stroke-width="3.8"/></svg>
<span class="t" style="left:752.88px;top:574px;font-size:17px;letter-spacing:-0.038px;">UpdatePlayerUIClient (client)</span>
<svg style="left:1191px;top:576.5px;" width="17" height="12" viewBox="0 0 17 12" fill="#fff" stroke="none" color="#fff"><path d="M1.2,6 Q4.3,1.45 8.5,1.45 Q12.7,1.45 15.8,6 Q12.7,10.55 8.5,10.55 Q4.3,10.55 1.2,6 Z" fill="none" stroke="currentColor" stroke-width="2.3" stroke-linejoin="miter"/><circle cx="8.5" cy="6" r="2.55"/></svg>
<svg style="left:1218px;top:574.0px;" width="13" height="17" viewBox="0 0 13 17" fill="#1c1f28" stroke="none" color="#1c1f28"><path fill-rule="evenodd" d="M1.7,7.4 H11.3 Q12.8,7.4 12.8,8.9 V15.3 Q12.8,16.8 11.3,16.8 H1.7 Q0.2,16.8 0.2,15.3 V8.9 Q0.2,7.4 1.7,7.4 Z M6.5,9 A1.4,1.4 0 0 0 5.75,11.6 L5.4,14.8 H7.6 L7.25,11.6 A1.4,1.4 0 0 0 6.5,9 Z"/><path d="M2.6,7.8 V4.7 A3.9,3.9 0 0 1 10.4,4.7 V7.8" fill="none" stroke="currentColor" stroke-width="1.7"/></svg>
<svg style="left:697.25px;top:609.0px;" width="8" height="11" viewBox="0 0 8 11" fill="#949494" stroke="none" color="#949494"><path d="M0.7,1 L6.6,5.1 L0.7,9.2 Z" fill="none" stroke="currentColor" stroke-width="1.3" stroke-linejoin="round"/></svg>
<svg style="left:712.4px;top:606.8px;" width="19" height="19" viewBox="0 0 19 19" fill="#19e3d2" stroke="none" color="#19e3d2"><g transform="translate(0.7,2.2)"><path d="M0.65,11.6 V1.6 Q0.65,0.65 1.6,0.65 H5.8 L7,2.1 H13.6 Q14.8,2.1 14.8,3.3" fill="none" stroke="currentColor" stroke-width="1.3"/><path d="M2.9,3.2 H17 L14.6,12.7 H0.1 Z"/></g></svg>
<span class="t" style="left:740.38px;top:606px;font-size:17px;letter-spacing:0.019px;color:#19e3d2;">Start Area</span>
<svg style="left:1191px;top:609.0px;" width="17" height="12" viewBox="0 0 17 12" fill="#fff" stroke="none" color="#fff"><path d="M1.2,6 Q4.3,1.45 8.5,1.45 Q12.7,1.45 15.8,6 Q12.7,10.55 8.5,10.55 Q4.3,10.55 1.2,6 Z" fill="none" stroke="currentColor" stroke-width="2.3" stroke-linejoin="miter"/><circle cx="8.5" cy="6" r="2.55"/></svg>
<svg style="left:1218px;top:606.5px;" width="13" height="17" viewBox="0 0 13 17" fill="#1e212a" stroke="none" color="#1e212a"><path fill-rule="evenodd" d="M1.7,7.4 H11.3 Q12.8,7.4 12.8,8.9 V15.3 Q12.8,16.8 11.3,16.8 H1.7 Q0.2,16.8 0.2,15.3 V8.9 Q0.2,7.4 1.7,7.4 Z M6.5,9 A1.4,1.4 0 0 0 5.75,11.6 L5.4,14.8 H7.6 L7.25,11.6 A1.4,1.4 0 0 0 6.5,9 Z"/><path d="M2.6,7.8 V4.7 A3.9,3.9 0 0 1 10.4,4.7 V7.8" fill="none" stroke="currentColor" stroke-width="1.7"/></svg>
<svg style="left:712.4px;top:639.3px;" width="19" height="19" viewBox="0 0 19 19" fill="#fff" stroke="none" color="#fff"><g transform="translate(0.9,0.2)"><path d="M0.7,11.5 V1.6 Q0.7,0.7 1.6,0.7 H5.9 L7.3,2.2 H12.9 Q13.9,2.2 13.9,3.2" fill="none" stroke="currentColor" stroke-width="1.3"/><path d="M3.3,3.1 H16.4 L13.9,12 H0.1 Z"/></g><circle cx="13.8" cy="12.2" r="5.1" fill="#262832"/><circle cx="13.8" cy="12.2" r="3.7" fill="#262832" stroke="currentColor" stroke-width="1.1"/><path d="M13.8,9.8 V12.5 H15.9" fill="none" stroke="currentColor" stroke-width="1.05"/></svg>
<span class="t" style="left:740.38px;top:639px;font-size:17px;letter-spacing:0.077px;">Static Container (networked)</span>
<svg style="left:1191px;top:641.5px;" width="17" height="12" viewBox="0 0 17 12" fill="#fff" stroke="none" color="#fff"><path d="M1.2,6 Q4.3,1.45 8.5,1.45 Q12.7,1.45 15.8,6 Q12.7,10.55 8.5,10.55 Q4.3,10.55 1.2,6 Z" fill="none" stroke="currentColor" stroke-width="2.3" stroke-linejoin="miter"/><circle cx="8.5" cy="6" r="2.55"/></svg>
<svg style="left:1218px;top:639.0px;" width="13" height="17" viewBox="0 0 13 17" fill="#1e212a" stroke="none" color="#1e212a"><path fill-rule="evenodd" d="M1.7,7.4 H11.3 Q12.8,7.4 12.8,8.9 V15.3 Q12.8,16.8 11.3,16.8 H1.7 Q0.2,16.8 0.2,15.3 V8.9 Q0.2,7.4 1.7,7.4 Z M6.5,9 A1.4,1.4 0 0 0 5.75,11.6 L5.4,14.8 H7.6 L7.25,11.6 A1.4,1.4 0 0 0 6.5,9 Z"/><path d="M2.6,7.8 V4.7 A3.9,3.9 0 0 1 10.4,4.7 V7.8" fill="none" stroke="currentColor" stroke-width="1.7"/></svg>
<svg style="left:712.7px;top:671.7px;" width="17" height="17" viewBox="0 0 60 60" fill="#fff" stroke="none" color="#fff"><path fill-rule="evenodd" d="M5.9,12.4 H0 V7.5 Q0,0 7.5,0 H47.5 Q54.5,0 54.5,7 V43.1 H59.4 V47.4 Q59.4,59.4 48.4,59.4 H13.9 Q5.9,59.4 5.9,51.4 Z M9.8,5.5 H47.5 Q50.3,5.5 50.3,8.3 V43.1 H18.2 V49.6 Q18.2,53.8 14,53.8 Q9.8,53.8 9.8,49.6 Z"/><path d="M25.7,17.5 L17.9,25.7 L25.7,33.9 M35,17.5 L42.8,25.7 L35,33.9" fill="none" stroke="currentColor" stroke-width="3.8"/></svg>
<span class="t" style="left:740.38px;top:671px;font-size:17px;letter-spacing:-0.309px;">GeneratePuzzleServer</span>
<svg style="left:1191px;top:674.0px;" width="17" height="12" viewBox="0 0 17 12" fill="#fff" stroke="none" color="#fff"><path d="M1.2,6 Q4.3,1.45 8.5,1.45 Q12.7,1.45 15.8,6 Q12.7,10.55 8.5,10.55 Q4.3,10.55 1.2,6 Z" fill="none" stroke="currentColor" stroke-width="2.3" stroke-linejoin="miter"/><circle cx="8.5" cy="6" r="2.55"/></svg>
<svg style="left:1218px;top:671.5px;" width="13" height="17" viewBox="0 0 13 17" fill="#1e212a" stroke="none" color="#1e212a"><path fill-rule="evenodd" d="M1.7,7.4 H11.3 Q12.8,7.4 12.8,8.9 V15.3 Q12.8,16.8 11.3,16.8 H1.7 Q0.2,16.8 0.2,15.3 V8.9 Q0.2,7.4 1.7,7.4 Z M6.5,9 A1.4,1.4 0 0 0 5.75,11.6 L5.4,14.8 H7.6 L7.25,11.6 A1.4,1.4 0 0 0 6.5,9 Z"/><path d="M2.6,7.8 V4.7 A3.9,3.9 0 0 1 10.4,4.7 V7.8" fill="none" stroke="currentColor" stroke-width="1.7"/></svg>
</div>
</body></html>
